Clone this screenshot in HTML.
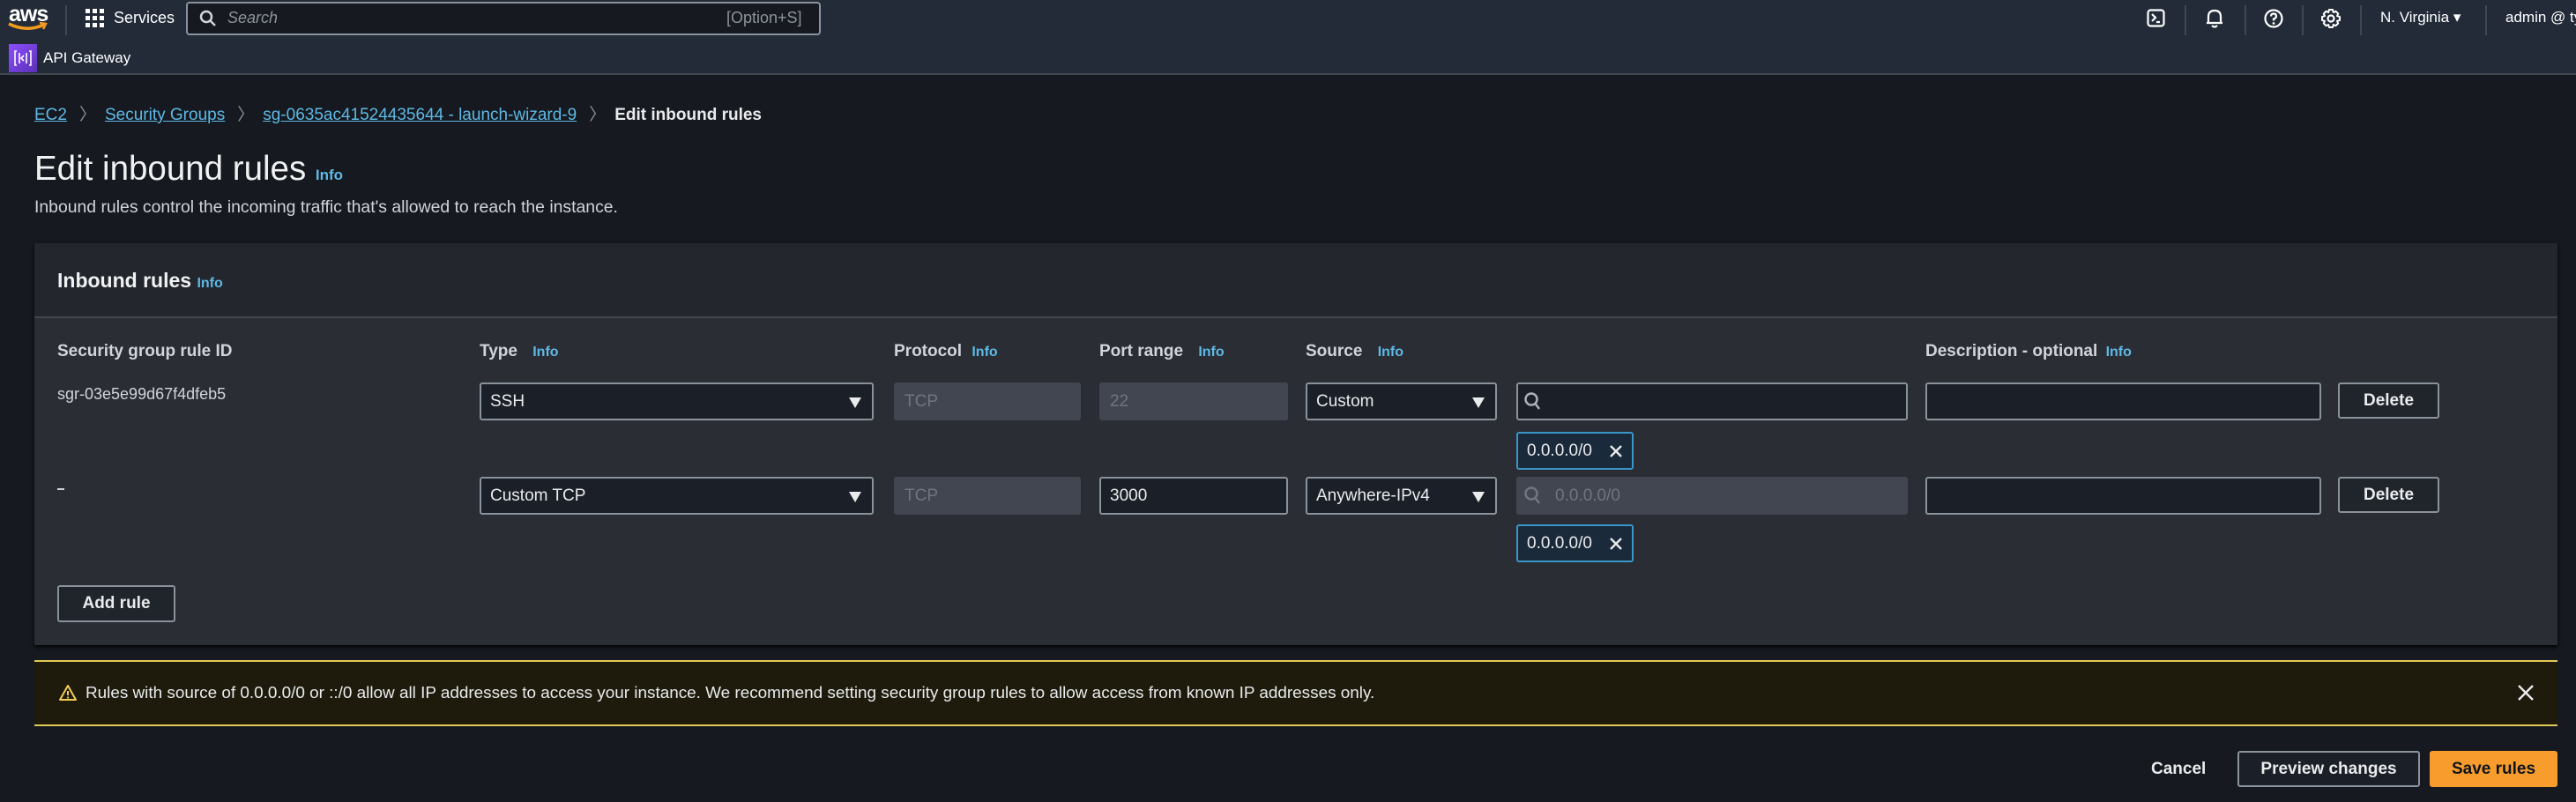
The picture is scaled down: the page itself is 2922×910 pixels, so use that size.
<!DOCTYPE html>
<html><head><meta charset="utf-8"><style>
*{box-sizing:border-box;margin:0;padding:0}
body{width:2922px;height:910px;background:#16191f;font-family:"Liberation Sans",sans-serif;color:#d1d5db;position:relative;overflow:hidden}
.a{position:absolute}
.nav{left:0;top:0;width:2922px;height:85px;background:#232b38;border-bottom:2px solid #414750}
.link{color:#5db9e6;text-decoration:underline}
.info{color:#5db9e6;font-weight:bold;font-size:16px}
.hd{font-weight:bold;font-size:19px;color:#d1d5db}
.inp{background:#1b1f27;border:2px solid #8a929c;border-radius:3px;height:43px;font-size:19px;color:#e9ebed;padding-left:10px;line-height:39px}
.dis{background:#424650;border-color:#424650;color:#6f7680}
.arrow{position:absolute;right:12px;top:15px;width:0;height:0;border-left:7px solid transparent;border-right:7px solid transparent;border-top:12px solid #e9ebed}
.btn{border:2px solid #8a929c;border-radius:3px;background:#20242b;color:#e9ebed;font-weight:bold;font-size:19px;text-align:center}
.tok{background:#1b2a3a;border:2px solid #3a95c9;border-radius:3px;height:43px;font-size:19px;color:#e9ebed;padding-left:10px;line-height:39px}
.sep{width:2px;height:34px;background:#414750;top:6px}
.chev{color:#8d949c;margin:0 10px 0 14px}
</style></head><body>
<div class="a nav"></div>
<div class="a" style="left:10px;top:2px;font-size:25px;color:#fff;font-weight:bold;letter-spacing:-1px">aws</div>
<svg class="a" style="left:8px;top:24px" width="46" height="12"><path d="M2 3 Q22 13 42 4" stroke="#f29c1f" stroke-width="3.5" fill="none"/><path d="M37 2 L44 3 L41 9" stroke="#f29c1f" stroke-width="2.5" fill="none"/></svg>
<div class="a sep" style="left:74px"></div>
<svg class="a" style="left:97px;top:10px" width="22" height="22" fill="#fff"><rect x="0" y="0" width="5" height="5"/><rect x="8" y="0" width="5" height="5"/><rect x="16" y="0" width="5" height="5"/><rect x="0" y="8" width="5" height="5"/><rect x="8" y="8" width="5" height="5"/><rect x="16" y="8" width="5" height="5"/><rect x="0" y="16" width="5" height="5"/><rect x="8" y="16" width="5" height="5"/><rect x="16" y="16" width="5" height="5"/></svg>
<div class="a" style="left:129px;top:10px;font-size:18px;color:#fff">Services</div>
<div class="a" style="left:211px;top:2px;width:720px;height:38px;background:#16191f;border:2px solid #8a929c;border-radius:4px"></div>
<svg class="a" style="left:226px;top:11px" width="20" height="20"><circle cx="8" cy="8" r="6" stroke="#d1d5db" stroke-width="2.5" fill="none"/><path d="M12.5 12.5 L18 18" stroke="#d1d5db" stroke-width="2.5"/></svg>
<div class="a" style="left:258px;top:10px;font-size:18px;color:#8d949c;font-style:italic">Search</div>
<div class="a" style="left:824px;top:10px;font-size:18px;color:#8d949c">[Option+S]</div>
<svg class="a" style="left:2435px;top:10px" width="22" height="22"><rect x="1.5" y="1.5" width="18" height="18" rx="3" stroke="#fff" stroke-width="2.2" fill="none"/><path d="M6 6 L10 10 L6 14 M11 15 L15 15" stroke="#fff" stroke-width="2.2" fill="none"/></svg>
<div class="a sep" style="left:2478px"></div>
<svg class="a" style="left:2501px;top:9px" width="22" height="24"><path d="M4 17 L4 10 Q4 3 11 3 Q18 3 18 10 L18 17 Z M2 17 L20 17 M8 20 Q11 23 14 20" stroke="#fff" stroke-width="2.2" fill="none" stroke-linejoin="round"/></svg>
<div class="a sep" style="left:2546px"></div>
<svg class="a" style="left:2567px;top:9px" width="24" height="24"><circle cx="12" cy="12" r="9.5" stroke="#fff" stroke-width="2.2" fill="none"/><path d="M9 9.5 Q9 6.5 12 6.5 Q15 6.5 15 9.5 Q15 11.5 12 12.5 L12 14.5" stroke="#fff" stroke-width="2.2" fill="none"/><circle cx="12" cy="17.5" r="1.4" fill="#fff"/></svg>
<div class="a sep" style="left:2611px"></div>
<svg class="a" style="left:2632px;top:9px" width="24" height="24"><circle cx="12" cy="12" r="3.5" stroke="#fff" stroke-width="2.2" fill="none"/><path d="M10 2 L14 2 L14.8 5 L17.5 3.8 L20.2 6.5 L19 9.2 L22 10 L22 14 L19 14.8 L20.2 17.5 L17.5 20.2 L14.8 19 L14 22 L10 22 L9.2 19 L6.5 20.2 L3.8 17.5 L5 14.8 L2 14 L2 10 L5 9.2 L3.8 6.5 L6.5 3.8 L9.2 5 Z" stroke="#fff" stroke-width="2" fill="none" stroke-linejoin="round"/></svg>
<div class="a sep" style="left:2677px"></div>
<div class="a" style="left:2700px;top:10px;font-size:17px;color:#fff">N. Virginia ▾</div>
<div class="a sep" style="left:2819px"></div>
<div class="a" style="left:2842px;top:10px;font-size:17px;color:#fff;white-space:nowrap">admin @ ty</div>
<div class="a" style="left:10px;top:50px;width:32px;height:32px;background:linear-gradient(135deg,#8c4fff,#5a30b5)"></div>
<svg class="a" style="left:10px;top:50px" width="32" height="32"><path d="M9 8 L7 8 L7 24 L9 24 M23 8 L25 8 L25 24 L23 24 M12 10 L12 22 M20 10 L20 22 M17 13 L14 16 L17 19" stroke="#fff" stroke-width="1.6" fill="none"/></svg>
<div class="a" style="left:49px;top:56px;font-size:17px;color:#fff">API Gateway</div>

<div class="a" style="left:39px;top:115px;font-size:19px;white-space:nowrap"><span class="link">EC2</span><span class="chev">〉</span><span class="link">Security Groups</span><span class="chev">〉</span><span class="link">sg-0635ac41524435644 - launch-wizard-9</span><span class="chev">〉</span><b style="color:#e9ebed">Edit inbound rules</b></div>
<div class="a" style="left:39px;top:170px;font-size:38.5px;color:#f0f1f2;white-space:nowrap">Edit inbound rules <span class="info" style="font-size:17px">Info</span></div>
<div class="a" style="left:39px;top:224px;font-size:19.4px;color:#d1d5db">Inbound rules control the incoming traffic that's allowed to reach the instance.</div>

<div class="a" style="left:39px;top:276px;width:2862px;height:456px;background:#2a2d33;box-shadow:0 2px 4px #000"></div>
<div class="a" style="left:39px;top:276px;width:2862px;height:85px;background:#23262d;border-bottom:2px solid #414750"></div>
<div class="a" style="left:65px;top:305px;font-size:23px;font-weight:bold;color:#f0f1f2">Inbound rules <span class="info">Info</span></div>

<div class="a hd" style="left:65px;top:388px">Security group rule ID</div>
<div class="a hd" style="left:544px;top:388px">Type <span class="info" style="margin-left:12px">Info</span></div>
<div class="a hd" style="left:1014px;top:388px">Protocol <span class="info" style="margin-left:6px">Info</span></div>
<div class="a hd" style="left:1247px;top:388px">Port range <span class="info" style="margin-left:12px">Info</span></div>
<div class="a hd" style="left:1481px;top:388px">Source <span class="info" style="margin-left:12px">Info</span></div>
<div class="a hd" style="left:2184px;top:388px">Description - optional <span class="info" style="margin-left:4px">Info</span></div>

<div class="a" style="left:65px;top:437px;font-size:18px;color:#d1d5db">sgr-03e5e99d67f4dfeb5</div>
<div class="a inp" style="left:544px;top:434px;width:447px">SSH<span class="arrow"></span></div>
<div class="a inp dis" style="left:1014px;top:434px;width:212px">TCP</div>
<div class="a inp dis" style="left:1247px;top:434px;width:214px">22</div>
<div class="a inp" style="left:1481px;top:434px;width:217px">Custom<span class="arrow"></span></div>
<div class="a inp" style="left:1720px;top:434px;width:444px"></div>
<svg class="a" style="left:1728px;top:444px" width="22" height="24"><circle cx="9" cy="9" r="6.5" stroke="#aab1b9" stroke-width="2.5" fill="none"/><path d="M13.5 14 L18 20" stroke="#aab1b9" stroke-width="2.5"/></svg>
<div class="a inp" style="left:2184px;top:434px;width:449px"></div>
<div class="a btn" style="left:2652px;top:434px;width:115px;height:41px;line-height:37px">Delete</div>
<div class="a tok" style="left:1720px;top:490px;width:133px">0.0.0.0/0<svg style="position:absolute;right:10px;top:12px" width="16" height="16"><path d="M2 2 L14 14 M14 2 L2 14" stroke="#e9ebed" stroke-width="2.4"/></svg></div>

<div class="a" style="left:65px;top:554px;width:8px;height:2px;background:#d1d5db"></div>
<div class="a inp" style="left:544px;top:541px;width:447px">Custom TCP<span class="arrow"></span></div>
<div class="a inp dis" style="left:1014px;top:541px;width:212px">TCP</div>
<div class="a inp" style="left:1247px;top:541px;width:214px">3000</div>
<div class="a inp" style="left:1481px;top:541px;width:217px">Anywhere-IPv4<span class="arrow"></span></div>
<div class="a inp dis" style="left:1720px;top:541px;width:444px;padding-left:42px">0.0.0.0/0</div>
<svg class="a" style="left:1728px;top:551px" width="22" height="24"><circle cx="9" cy="9" r="6.5" stroke="#6f7680" stroke-width="2.5" fill="none"/><path d="M13.5 14 L18 20" stroke="#6f7680" stroke-width="2.5"/></svg>
<div class="a inp" style="left:2184px;top:541px;width:449px"></div>
<div class="a btn" style="left:2652px;top:541px;width:115px;height:41px;line-height:37px">Delete</div>
<div class="a tok" style="left:1720px;top:595px;width:133px">0.0.0.0/0<svg style="position:absolute;right:10px;top:12px" width="16" height="16"><path d="M2 2 L14 14 M14 2 L2 14" stroke="#e9ebed" stroke-width="2.4"/></svg></div>

<div class="a btn" style="left:65px;top:664px;width:134px;height:42px;line-height:38px">Add rule</div>

<div class="a" style="left:39px;top:749px;width:2862px;height:75px;background:#1e1b0c;border-top:2px solid #e0ca57;border-bottom:2px solid #e0ca57"></div>
<svg class="a" style="left:66px;top:776px" width="22" height="20"><path d="M11 2 L20 18 L2 18 Z" stroke="#f2cd54" stroke-width="2" fill="none" stroke-linejoin="round"/><path d="M11 8 L11 13" stroke="#f2cd54" stroke-width="2"/><circle cx="11" cy="15.5" r="1.1" fill="#f2cd54"/></svg>
<div class="a" style="left:97px;top:776px;font-size:18.9px;color:#e9ebed;white-space:nowrap">Rules with source of 0.0.0.0/0 or ::/0 allow all IP addresses to access your instance. We recommend setting security group rules to allow access from known IP addresses only.</div>
<svg class="a" style="left:2855px;top:776px" width="20" height="20"><path d="M2 2 L18 18 M18 2 L2 18" stroke="#e9ebed" stroke-width="2.4"/></svg>

<div class="a" style="left:2440px;top:862px;font-size:19px;font-weight:bold;color:#e9ebed">Cancel</div>
<div class="a btn" style="left:2538px;top:852px;width:207px;height:41px;line-height:37px;background:#1b1f27">Preview changes</div>
<div class="a" style="left:2756px;top:852px;width:145px;height:41px;line-height:41px;background:#f89c2d;border-radius:3px;color:#0f141a;font-weight:bold;font-size:19px;text-align:center">Save rules</div>
</body></html>
